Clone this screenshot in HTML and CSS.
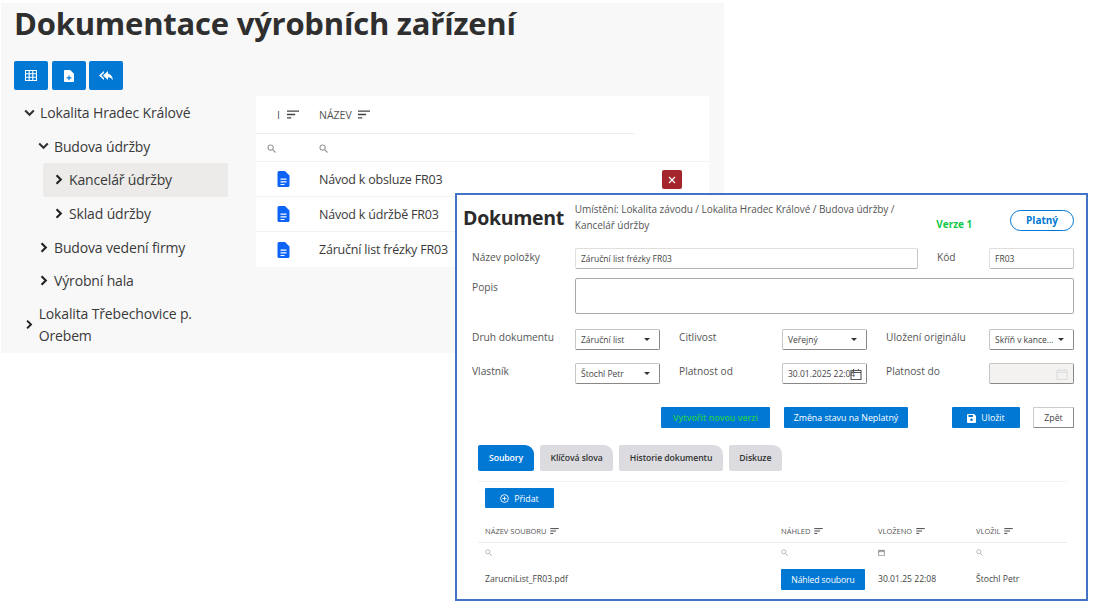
FILE: index.html
```html
<!DOCTYPE html>
<html lang="cs">
<head>
    <meta charset="UTF-8">
    <title>Dokumentace výrobních zařízení</title>
    <link rel="stylesheet" href="styles.css">
</head>
<body>
    <svg class="defs" width="0" height="0">
        <symbol id="i-sort" viewBox="0 0 14 10"><path d="M0 1h14M0 5h9.500M0 9h5" fill="none" stroke="currentColor" stroke-width="1.500"/></symbol>
        <symbol id="i-search" viewBox="0 0 12 12"><circle cx="4.800" cy="4.800" r="3.500" fill="none" stroke="currentColor" stroke-width="1.400"/><path d="M7.500 7.500l3.800 3.800" stroke="currentColor" stroke-width="1.600"/></symbol>
        <symbol id="i-doc" viewBox="0 0 12 16"><path fill-rule="evenodd" d="M1.500 0H7.500L12 4.500V14.500A1.500 1.500 0 0 1 10.500 16H1.500A1.500 1.500 0 0 1 0 14.500V1.500A1.500 1.500 0 0 1 1.500 0ZM3 7.500V8.800H9V7.500ZM3 10.300V11.600H9V10.300ZM3 13V14H7V13Z" fill="currentColor"/></symbol>
        <symbol id="i-down" viewBox="0 0 12 8"><path d="M1.300 1.300L6 6l4.700-4.700" fill="none" stroke="currentColor" stroke-width="2.300"/></symbol>
        <symbol id="i-right" viewBox="0 0 8 12"><path d="M1.300 1.300L6 6l-4.700 4.700" fill="none" stroke="currentColor" stroke-width="2.300"/></symbol>
        <symbol id="i-cal" viewBox="0 0 12 12"><path d="M1 2.500h10v9H1zM1 4.500h10M3.500 1v2M8.500 1v2" fill="none" stroke="currentColor" stroke-width="1.100"/></symbol>
    </svg>

    <div class="window back">
        <h1>Dokumentace výrobních zařízení</h1>
        <div class="toolbar">
            <button class="btn-icon">
                <svg width="12" height="11" viewBox="0 0 12 11"><path d="M.5.500h11v10H.5zM.5 3.800h11M.5 7.200h11M4.200.500v10M7.800.500v10" fill="none" stroke="#fff" stroke-width="1.100"/></svg>
            </button>
            <button class="btn-icon">
                <svg width="10" height="12" viewBox="0 0 10 12"><path fill-rule="evenodd" d="M1 0H6.200L10 3.800V11a1 1 0 0 1-1 1H1a1 1 0 0 1-1-1V1a1 1 0 0 1 1-1ZM4.400 5.500V7.300H2.600V8.500H4.400V10.300H5.600V8.500H7.400V7.300H5.600V5.500Z" fill="#fff"/></svg>
            </button>
            <button class="btn-icon">
                <svg width="14" height="10" viewBox="0 0 14 10"><path d="M5 0L0 4.500 5 9V7L2.300 4.500 5 2Z" fill="#fff"/><path d="M9 0L4 4.500 9 9V6.300C11 6.300 12.800 7.300 14 9.500 13.700 6 12 3.200 9 2.800Z" fill="#fff"/></svg>
            </button>
        </div>
        <div class="content">
            <ul class="tree">
                <li><svg class="chev" width="11" height="8"><use href="#i-down"/></svg>Lokalita Hradec Králové</li>
                <li class="lvl2"><svg class="chev" width="11" height="8"><use href="#i-down"/></svg>Budova údržby</li>
                <li class="lvl3 active"><svg class="chev-r" width="8" height="11"><use href="#i-right"/></svg>Kancelář údržby</li>
                <li class="lvl3"><svg class="chev-r" width="8" height="11"><use href="#i-right"/></svg>Sklad údržby</li>
                <li class="lvl2"><svg class="chev-r" width="8" height="11"><use href="#i-right"/></svg>Budova vedení firmy</li>
                <li class="lvl2"><svg class="chev-r" width="8" height="11"><use href="#i-right"/></svg>Výrobní hala</li>
                <li class="wrap"><svg class="chev-r" width="8" height="11"><use href="#i-right"/></svg><span>Lokalita Třebechovice p. Orebem</span></li>
            </ul>
            <div class="doc-table">
                <div class="doc-head">
                    <div class="col-i">I <svg class="sort" width="12" height="9"><use href="#i-sort"/></svg></div>
                    <div>NÁZEV <svg class="sort" width="12" height="9"><use href="#i-sort"/></svg></div>
                </div>
                <div class="doc-filter">
                    <div class="col-i"><svg width="9" height="9"><use href="#i-search"/></svg></div>
                    <div><svg width="9" height="9"><use href="#i-search"/></svg></div>
                </div>
                <div class="doc-row">
                    <div class="col-i"><svg class="doc-ico" width="13" height="16"><use href="#i-doc"/></svg></div>
                    <div class="doc-name">Návod k obsluze FR03</div>
                    <button class="btn-del">
                        <svg width="8" height="8" viewBox="0 0 8 8"><path d="M1 1l6 6M7 1L1 7" stroke="#fff" stroke-width="1.200"/></svg>
                    </button>
                </div>
                <div class="doc-row">
                    <div class="col-i"><svg class="doc-ico" width="13" height="16"><use href="#i-doc"/></svg></div>
                    <div class="doc-name">Návod k údržbě FR03</div>
                </div>
                <div class="doc-row">
                    <div class="col-i"><svg class="doc-ico" width="13" height="16"><use href="#i-doc"/></svg></div>
                    <div class="doc-name">Záruční list frézky FR03</div>
                </div>
            </div>
        </div>
    </div>

    <div class="window front">
        <div class="doc-top">
            <h2>Dokument</h2>
            <p class="location">Umístění: Lokalita závodu / Lokalita Hradec Králové / Budova údržby / Kancelář údržby</p>
            <span class="version">Verze 1</span>
            <span class="state">Platný</span>
        </div>

        <div class="row row-name">
            <label>Název položky</label>
            <div class="field">Záruční list frézky FR03</div>
            <label class="pad">Kód</label>
            <div class="field">FR03</div>
        </div>
        <div class="row row-desc">
            <label>Popis</label>
            <div class="field area"></div>
        </div>
        <div class="row row-three">
            <label>Druh dokumentu</label>
            <div class="field select">Záruční list<i></i></div>
            <label class="pad">Citlivost</label>
            <div class="field select">Veřejný<i></i></div>
            <label class="pad">Uložení originálu</label>
            <div class="field select">Skříň v kance...<i></i></div>
        </div>
        <div class="row row-three row-last">
            <label>Vlastník</label>
            <div class="field select">Štochl Petr<i></i></div>
            <label class="pad">Platnost od</label>
            <div class="field select date">30.01.2025 22:04<svg width="12" height="12"><use href="#i-cal"/></svg></div>
            <label class="pad">Platnost do</label>
            <div class="field select disabled"><svg width="12" height="12"><use href="#i-cal"/></svg></div>
        </div>

        <div class="actions">
            <button class="btn btn-new">Vytvořit novou verzi</button>
            <button class="btn btn-state">Změna stavu na Neplatný</button>
            <button class="btn btn-save">
                <svg width="9" height="9" viewBox="0 0 9 9"><path fill-rule="evenodd" d="M1 0H7L9 2V8a1 1 0 0 1-1 1H1A1 1 0 0 1 0 8V1A1 1 0 0 1 1 0ZM1.500 1V3H6V1ZM4.500 4.500A1.300 1.300 0 1 0 4.500 7.100 1.300 1.300 0 0 0 4.500 4.500Z" fill="#fff"/></svg>
                Uložit
            </button>
            <button class="btn btn-back">Zpět</button>
        </div>

        <div class="tabs">
            <div class="tab selected">Soubory</div>
            <div class="tab">Klíčová slova</div>
            <div class="tab">Historie dokumentu</div>
            <div class="tab">Diskuze</div>
        </div>

        <button class="btn btn-add">
            <svg width="9" height="9" viewBox="0 0 9 9"><circle cx="4.500" cy="4.500" r="3.900" fill="none" stroke="#fff" stroke-width=".9"/><path d="M4.500 2.500v4M2.500 4.500h4" stroke="#fff" stroke-width=".9"/></svg>
            Přidat
        </button>

        <div class="files">
            <div class="files-row files-head">
                <div>NÁZEV SOUBORU <svg width="9" height="6"><use href="#i-sort"/></svg></div>
                <div>NÁHLED <svg width="9" height="6"><use href="#i-sort"/></svg></div>
                <div>VLOŽENO <svg width="9" height="6"><use href="#i-sort"/></svg></div>
                <div>VLOŽIL <svg width="9" height="6"><use href="#i-sort"/></svg></div>
            </div>
            <div class="files-row files-filter">
                <div><svg width="7" height="7"><use href="#i-search"/></svg></div>
                <div><svg width="7" height="7"><use href="#i-search"/></svg></div>
                <div><svg width="7" height="7"><use href="#i-cal"/></svg></div>
                <div><svg width="7" height="7"><use href="#i-search"/></svg></div>
            </div>
            <div class="files-row files-data">
                <div>ZarucniList_FR03.pdf</div>
                <div><button class="btn btn-preview">Náhled souboru</button></div>
                <div>30.01.25 22:08</div>
                <div>Štochl Petr</div>
            </div>
        </div>
    </div>
</body>
</html>
```

FILE: styles.css
```css
* {
    margin: 0;
    padding: 0;
    box-sizing: border-box;
    font-family: 'Open Sans', 'Noto Sans', sans-serif;
}

body {
    background: white;
    width: 1094px;
    height: 604px;
    overflow: hidden;
    color: #333;
}

.defs {
    position: absolute;
}

.window {
    position: absolute;
}

button {
    border: none;
    cursor: pointer;
}

/* back window */
.back {
    left: 1px;
    top: 3px;
    width: 723px;
    height: 350px;
    background: #f8f8f8;
    padding: 0 13px;
}

h1 {
    font-size: 31px;
    line-height: 40px;
    font-weight: 700;
    color: #2f2f2f;
    letter-spacing: -0.22px;
}

.toolbar {
    display: flex;
    gap: 3.600px;
    margin-top: 18px;
}

.btn-icon {
    width: 34px;
    height: 29px;
    background: #0078d4;
    border-radius: 2px;
    display: flex;
    align-items: center;
    justify-content: center;
}

.content {
    display: flex;
    margin-top: 6px;
}

.tree {
    list-style: none;
    width: 242px;
    font-size: 14px;
    color: #3a3a3a;
    letter-spacing: -0.15px;
}

.tree li {
    display: flex;
    align-items: center;
    height: 33.600px;
    padding-left: 10px;
}

.tree .chev {
    margin-right: 5px;
    color: #333;
}

.tree .chev-r {
    margin: 0 6px 0 2px;
    color: #222;
}

.tree .lvl2 {
    padding-left: 24px;
}

.tree .lvl3 {
    margin-right: 28px;
    margin-left: 29px;
    padding-left: 10px;
    border-radius: 2px;
}

.tree .active {
    background: #ecebe9;
}

.tree .wrap {
    height: 44px;
    line-height: 22px;
    margin-top: 5px;
    width: 200px;
}

.doc-table {
    width: 453px;
    height: 171px;
    background: white;
    font-size: 13px;
    color: #3a3a3a;
}

.doc-head, .doc-filter, .doc-row {
    display: flex;
    align-items: center;
}

.col-i {
    width: 63px;
    padding-left: 21px;
}

.doc-head {
    height: 38px;
    width: 378px;
    border-bottom: 1px solid #edebe9;
    font-size: 10.500px;
    color: #555;
}

.sort {
    margin-left: 4px;
    color: #444;
}

.doc-filter {
    height: 28px;
    color: #999;
    border-bottom: 1px solid #f3f2f1;
}

.doc-filter .col-i {
    padding-left: 11px;
}

.doc-row {
    height: 35px;
    border-bottom: 1px solid #f3f2f1;
    position: relative;
}

.doc-row:first-of-type {
    height: 36px;
}

.doc-row:last-child {
    border-bottom: none;
}

.doc-row .col-i {
    padding-left: 21px;
}

.doc-ico {
    color: #0d63f5;
    display: block;
}

.doc-name {
    letter-spacing: -0.2px;
    font-size: 12.500px;
}

.btn-del {
    position: absolute;
    left: 406px;
    top: 8px;
    width: 20px;
    height: 19px;
    background: #a4262c;
    border-radius: 2px;
    display: flex;
    align-items: center;
    justify-content: center;
}

/* front window */
.front {
    left: 455px;
    top: 193px;
    width: 633px;
    height: 408px;
    background: white;
    border: 2px solid #4472c4;
    padding: 0 12px 0 15px;
}

.doc-top {
    display: flex;
    height: 48px;
    padding-top: 6px;
}

h2 {
    font-size: 19.500px;
    font-weight: 700;
    width: 103px;
    line-height: 34px;
    color: #2a2a2a;
    margin-left: -9px;
    margin-right: 9px;
    letter-spacing: -0.3px;
    white-space: nowrap;
}

.location {
    width: 345px;
    font-size: 10px;
    line-height: 15.500px;
    color: #555;
    letter-spacing: -0.05px;
    padding-top: 1px;
}

.version {
    margin-left: 17px;
    margin-top: 16px;
    font-size: 10px;
    font-weight: 700;
    color: #12c84b;
    width: 74px;
}

.state {
    width: 64px;
    height: 21px;
    margin-top: 9px;
    border: 1px solid #0078d4;
    border-radius: 11px;
    text-align: center;
    font-size: 10px;
    line-height: 18px;
    font-weight: 700;
    color: #0078d4;
}

.row {
    display: grid;
    font-size: 10.200px;
    color: #555;
}

.row label {
    line-height: 14px;
    padding-top: 1px;
}

.row label.pad {
    padding-left: 19px;
}

.row-name {
    grid-template-columns: 103px 343px 71px 85px;
    height: 21px;
    margin-top: 5px;
}

.row-name label {
    padding-top: 2px;
}

.row-desc {
    grid-template-columns: 103px 499px;
    height: 36px;
    margin-top: 9px;
    margin-bottom: 15px;
}

.row-desc label {
    padding-top: 2px;
}

.row-three {
    grid-template-columns: 103px 85px 122px 85px 122px 85px;
    height: 21px;
}

.row-last {
    margin-top: 13px;
}

.field {
    height: 21px;
    background: white;
    border: 1px solid #e1dfdd;
    border-right-color: #c8c6c4;
    border-bottom-color: #b5b3b1;
    border-radius: 2px;
    font-size: 8.500px;
    line-height: 19px;
    padding-left: 5px;
    color: #444;
    white-space: nowrap;
    display: flex;
    align-items: center;
}

.area {
    height: 36px;
    border-color: #aaa;
}

.select {
    position: relative;
    border: 1px solid #8a8886;
    border-top-color: #c8c6c4;
    border-left-color: #c8c6c4;
}

.select i {
    position: absolute;
    right: 9px;
    top: 8px;
    border: 3px solid transparent;
    border-top: 3px solid #333;
}

.date svg, .disabled svg {
    position: absolute;
    right: 4px;
    top: 4px;
    color: #555;
}

.disabled {
    background: #f3f2f1;
}

.disabled svg {
    right: 5px;
    color: #ddd;
}

.btn {
    height: 21px;
    background: #0078d4;
    color: white;
    font-size: 8.800px;
    border-radius: 1px;
    display: flex;
    align-items: center;
    justify-content: center;
    gap: 5px;
    padding-top: 1px;
}

.actions {
    display: flex;
    margin-top: 23px;
    margin-left: 189px;
}

.btn-new {
    width: 109px;
    color: #22cc55;
    font-weight: 600;
    margin-right: 14px;
}

.btn-state {
    width: 124px;
    margin-right: 44px;
}

.btn-save {
    width: 68px;
    margin-right: 13px;
}

.btn-back {
    width: 41px;
    background: white;
    color: #444;
    border: 1px solid #8a8886;
    border-top-color: #ccc;
    border-left-color: #ccc;
}

.tabs {
    display: flex;
    gap: 6px;
    margin-top: 17px;
    margin-left: 6px;
    padding-bottom: 10px;
    width: 589px;
    border-bottom: 1px solid #f3f2f1;
}

.tab {
    height: 26px;
    padding: 0 10.500px;
    background: #dcdce0;
    border-radius: 2px 9px 2px 2px;
    font-size: 8.700px;
    font-weight: 600;
    line-height: 26px;
    color: #333;
    letter-spacing: -0.1px;
}

.tab.selected {
    background: #0078d4;
    color: white;
    padding: 0 11px;
}

.btn-add {
    width: 69px;
    height: 20px;
    margin: 6px 0 0 13px;
}

.files {
    margin-left: 6px;
    margin-top: 13px;
    width: 589px;
}

.files-row {
    display: grid;
    grid-template-columns: 296px 97px 98px 91px;
    padding-left: 7px;
    align-items: center;
}

.files-head {
    height: 22px;
    padding-bottom: 2px;
    font-size: 7.500px;
    color: #555;
    border-bottom: 1px solid #edebe9;
}

.files-head svg {
    margin-left: 2px;
    color: #333;
}

.files-filter {
    height: 19px;
    color: #aaa;
}

.files-filter div {
    display: flex;
}

.files-filter div:nth-child(3) {
    color: #666;
}

.files-data {
    height: 34px;
    font-size: 8.600px;
    color: #444;
}

.btn-preview {
    width: 84px;
    font-size: 8.600px;
    letter-spacing: -0.1px;
}
```
